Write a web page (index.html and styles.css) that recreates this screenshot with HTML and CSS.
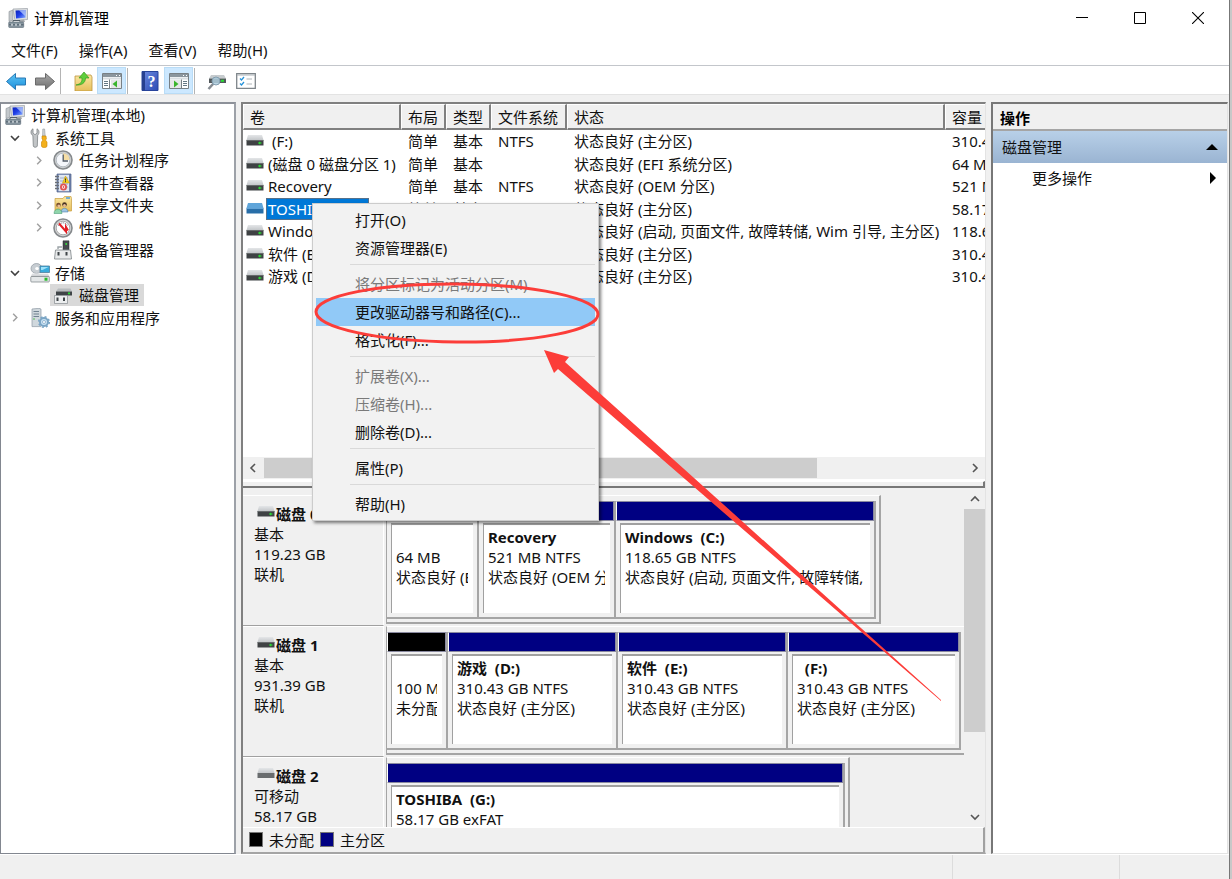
FILE: index.html
```html
<!DOCTYPE html>
<html lang="zh-CN">
<head>
<meta charset="utf-8">
<title>计算机管理</title>
<link rel="stylesheet" href="styles.css">
</head>
<body>
<svg class="defs" aria-hidden="true">
  <defs>
    <linearGradient id="gScreen" x1="0" y1="0" x2="1" y2="1"><stop offset="0" stop-color="#0a1fb8"/><stop offset=".5" stop-color="#2040e8"/><stop offset="1" stop-color="#8fb4ff"/></linearGradient>
    <linearGradient id="gBlue" x1="0" y1="0" x2="0" y2="1"><stop offset="0" stop-color="#5cc4f4"/><stop offset="1" stop-color="#1c8fdc"/></linearGradient>
    <linearGradient id="gGray" x1="0" y1="0" x2="0" y2="1"><stop offset="0" stop-color="#a8a8a8"/><stop offset="1" stop-color="#6f6f6f"/></linearGradient>
    <linearGradient id="gFolder" x1="0" y1="0" x2="0" y2="1"><stop offset="0" stop-color="#fbe7a2"/><stop offset="1" stop-color="#e6bf5c"/></linearGradient>
    <linearGradient id="gTop" x1="0" y1="0" x2="0" y2="1"><stop offset="0" stop-color="#e4e6e8"/><stop offset="1" stop-color="#c4c7ca"/></linearGradient>
    <linearGradient id="gHelp" x1="0" y1="0" x2="1" y2="1"><stop offset="0" stop-color="#6d8be0"/><stop offset="1" stop-color="#2c4bb4"/></linearGradient>
    <symbol id="computer" viewBox="0 0 20 20">
      <path d="M1 3.500l4-1.500v10l-4 1.500z" fill="#c3c8cc" stroke="#8b9196" stroke-width=".6"/>
      <path d="M5 1l14.500-.5v11L7 12.500z" fill="#dcdfe2" stroke="#989da3" stroke-width=".7"/>
      <path d="M7.500 2.400l10-.5v7.800l-9.500.9z" fill="url(#gScreen)"/>
      <path d="M11 2.200l6.500-.3v6.500z" fill="#b9cffb" opacity=".75"/>
      <path d="M12 12l4-.4 1 2.400h-4z" fill="#a5a9ad"/>
      <path d="M5 12.500h7v2H5z" fill="none" stroke="#55606a" stroke-width="1"/>
      <rect x=".7" y="14" width="15" height="5.500" rx=".8" fill="#84939d" stroke="#596873" stroke-width=".6"/>
      <path d="M1 16.800h14.500" stroke="#51606b"/><path d="M4 15.800v2M8 15.800v2M12 15.800v2" stroke="#dfe5e9" stroke-width="1.400"/>
    </symbol>
    <symbol id="tools" viewBox="0 0 20 20">
      <path d="M3 .8v4.400l2 1.500 2-1.500V.8c2.200 1 2.800 4.500.7 6.400L7.300 18c-.3 1.700-3.800 1.700-4 0L2.900 7.500C.2 6 .5 2 3 .8z" fill="#c2c5c7" stroke="#7f8487" stroke-width=".8"/>
      <path d="M12.800 1h1.800l.6 7h-2.600z" fill="#cfd3d5" stroke="#92979a" stroke-width=".6"/>
      <path d="M12 8h4l.4 3-1 1 1.600 2v4c0 2-5.500 2-5.500 0v-4l1.500-2-1-1z" fill="#f3b01c" stroke="#c98300" stroke-width=".6"/>
    </symbol>
    <symbol id="clock" viewBox="0 0 20 20">
      <circle cx="10" cy="10" r="9" fill="#d0d2d3" stroke="#85898c" stroke-width="1.600"/>
      <circle cx="10" cy="10" r="6.800" fill="#f4f6fa" stroke="#aab2ba" stroke-width=".8"/>
      <path d="M10 10V3.300a6.700 6.700 0 0 1 6.700 6.700z" fill="#f5dda4"/>
      <path d="M10.200 4.500V11H15" fill="none" stroke="#525b66" stroke-width="1.300"/>
    </symbol>
    <symbol id="eventlog" viewBox="0 0 20 20">
      <path d="M4 1h14v18H4z" fill="#7085b0" stroke="#51618a" stroke-width=".7"/><path d="M5.500 1.800H16v16.400H5.500z" fill="#dfe7f3"/>
      <path d="M7 5h8M7 8h8M7 11h8M7 14h8" stroke="#9fadc8"/>
      <path d="M2 3.500h4M2 6.500h4M2 9.500h4M2 12.500h4M2 15.500h4" stroke="#6a6f77" stroke-width="1.300"/>
      <path d="M12.500 3l4 7h-7z" fill="#f8cf1c" stroke="#bd970c" stroke-width=".5"/><path d="M12.500 5.500v2.200M12.500 8.200v1" stroke="#333"/>
      <circle cx="10.500" cy="14" r="2.600" fill="#fff" stroke="#e15353" stroke-width="1.800"/><circle cx="10.500" cy="14" r=".9" fill="#e15353"/>
    </symbol>
    <symbol id="shared" viewBox="0 0 20 20">
      <path d="M2 3.500h8l1.500-2h6.500l.5 2v12.500H2z" fill="url(#gFolder)" stroke="#c79c3c" stroke-width=".7"/><path d="M13 3h4" stroke="#4a9be0" stroke-width="1.500"/>
      <circle cx="5.500" cy="10" r="2.300" fill="#7a5130"/><circle cx="5.800" cy="11" r="1.500" fill="#e9bd93"/>
      <circle cx="11.500" cy="9.500" r="2.300" fill="#473224"/><circle cx="11.500" cy="10.500" r="1.500" fill="#e9bd93"/>
      <path d="M8 17c0-5 7-5 7 0z" fill="#9fc4e2" stroke="#38719f" stroke-width=".5"/><path d="M1 18.500c0-6 8-6 8 0z" fill="#8fd5ab" stroke="#3b906a" stroke-width=".5"/>
    </symbol>
    <symbol id="perf" viewBox="0 0 20 20">
      <circle cx="10" cy="10" r="9" fill="#d8d9da" stroke="#85898c" stroke-width="1.600"/><circle cx="10" cy="10" r="6.800" fill="#fff" stroke="#999" stroke-width=".8"/>
      <path d="M5.500 8A5 5 0 0 1 14.800 8" fill="none" stroke="#596168" stroke-dasharray="1 1"/>
      <path d="M6 5.500l7 8V9l2 3.500" fill="none" stroke="#e31f25" stroke-width="2"/>
    </symbol>
    <symbol id="device" viewBox="0 0 20 20">
      <path d="M10 .8h6v9h-6z" fill="#474b4e" stroke="#24292c" stroke-width=".5"/><circle cx="13.200" cy="4" r="1" fill="#38df3e"/>
      <path d="M5 9v-2h4" stroke="#9ba2a6" stroke-width="1.400" fill="none"/>
      <path d="M2.500 10h15l1 9h-17z" fill="#e8eaeb" stroke="#7c8386" stroke-width=".8"/><path d="M5.500 12v3.500M13.500 12v3.500" stroke="#3f4549" stroke-width="2"/>
    </symbol>
    <symbol id="storage" viewBox="0 0 20 20">
      <ellipse cx="6.500" cy="5.500" rx="5.500" ry="5" fill="#c7cdd2" stroke="#8e979f" stroke-width=".7"/><ellipse cx="7" cy="5.500" rx="1.800" ry="1.500" fill="#fff"/>
      <path d="M10 3h9.500v6.500H10z" fill="#38abdc" stroke="#4f7f9c" stroke-width=".8"/><path d="M11 4h7.500l-6 3H11z" fill="#9ce1fa"/>
      <path d="M2 10.500h16l1.500 3.500H.8z" fill="url(#gTop)"/><rect x=".8" y="13.500" width="18.500" height="5.500" rx=".8" fill="#e4e7e8" stroke="#777e83" stroke-width=".7"/><path d="M14.500 16.200h3" stroke="#27bc2c" stroke-width="3"/>
    </symbol>
    <symbol id="diskmgmt" viewBox="0 0 20 20">
      <path d="M5 3.500h12.500l1.500 3H3z" fill="#b8bcbe"/><path d="M3 6.500h16v4H3z" fill="#3f4447"/><circle cx="16" cy="8.400" r="1.100" fill="#29dc37"/>
      <path d="M1.500 10.500h13v8h-13z" fill="#eceeef" stroke="#858b8f" stroke-width=".7"/><path d="M4.500 12.500v3.500M11 12.500v3.500" stroke="#3f4549" stroke-width="2"/>
    </symbol>
    <symbol id="services" viewBox="0 0 20 20">
      <path d="M2 1l7-.7 2 .8v17.500H2z" fill="#d0d8dd" stroke="#8e9aa3" stroke-width=".7"/><path d="M3.500 3.500H9M3.500 6H9M3.500 8.500H9" stroke="#718291"/><circle cx="4" cy="11" r=".8" fill="#48bb47"/>
      <circle cx="14" cy="14" r="4" fill="#c9e2f4" stroke="#7aa5c5" stroke-width="2"/><circle cx="14" cy="14" r="5.300" fill="none" stroke="#7aa5c5" stroke-width="1.500" stroke-dasharray="2 2.160"/><circle cx="14" cy="14" r="1.500" fill="#fff" stroke="#6996b8" stroke-width=".6"/>
    </symbol>
    <symbol id="drive" viewBox="0 0 18 12">
      <path d="M2 0h14l1.500 5H.5z" fill="url(#gTop)"/><path d="M.5 5h17v5.500H.5z" fill="#3f4244"/><path d="M.5 5.500h17" stroke="#777b7d" stroke-width=".7"/><path d="M12 8h3.500M13.700 6.700v2.600" stroke="#2bdd33" stroke-width="1.200"/>
    </symbol>
    <symbol id="driveOff" viewBox="0 0 18 12"><path d="M2 0h14l1.500 5H.5z" fill="url(#gTop)"/><path d="M.5 5h17v5H.5z" fill="#696c6e"/></symbol>
    <symbol id="driveSel" viewBox="0 0 18 12"><path d="M2 0h14l1.500 5H.5z" fill="#5fa5da"/><path d="M.5 5h17v5.500H.5z" fill="#286ea8"/><path d="M.5 5.500h17" stroke="#7bb8e6" stroke-width=".7"/></symbol>
    <symbol id="left" viewBox="0 0 8 12"><path d="M6 2L2 6l4 4" fill="none" stroke="currentColor" stroke-width="1.600"/></symbol>
    <symbol id="right" viewBox="0 0 8 12"><path d="M2 2l4 4-4 4" fill="none" stroke="currentColor" stroke-width="1.600"/></symbol>
    <symbol id="down" viewBox="0 0 12 8"><path d="M2 2l4 4 4-4" fill="none" stroke="currentColor" stroke-width="1.600"/></symbol>
    <symbol id="up" viewBox="0 0 12 8"><path d="M2 6l4-4 4 4" fill="none" stroke="currentColor" stroke-width="1.600"/></symbol>
  </defs>
</svg>

<div class="window">
  <header class="titlebar">
    <svg class="icon"><use href="#computer"/></svg>
    <h1 class="title">计算机管理</h1>
    <div class="caption-buttons">
      <button class="caption" aria-label="最小化"><svg viewBox="0 0 12 12"><path d="M0 5.500h12" stroke="#000"/></svg></button>
      <button class="caption" aria-label="最大化"><svg viewBox="0 0 12 12"><path d="M.5.5h11v11H.5z" fill="none" stroke="#000"/></svg></button>
      <button class="caption" aria-label="关闭"><svg viewBox="0 0 12 12"><path d="M0 0l12 12M12 0L0 12" stroke="#000" stroke-width="1.100"/></svg></button>
    </div>
  </header>

  <nav class="menubar">
    <button>文件(F)</button><button>操作(A)</button><button>查看(V)</button><button>帮助(H)</button>
  </nav>

  <div class="toolbar">
    <button class="tool" aria-label="后退"><svg class="icon" viewBox="0 0 20 20"><path d="M.5 10.500l9-8v4.500h10v7h-10v4.500z" fill="url(#gBlue)" stroke="#2878b4"/></svg></button>
    <button class="tool" aria-label="前进"><svg class="icon" viewBox="0 0 20 20"><path d="M19.500 10.500l-9-8v4.500H.5v7h10v4.500z" fill="url(#gGray)" stroke="#6a6a6a"/></svg></button>
    <span class="tool-sep"></span>
    <button class="tool" aria-label="上一级"><svg class="icon" viewBox="0 0 20 20"><path d="M2 5h8l1-1h7l1 2v14H2z" fill="url(#gFolder)" stroke="#bd9440" stroke-width=".8"/><path d="M3 14c5-1 6-3 6-7H6l5-6 5 6h-3.500c0 5-4 7.500-9.500 7z" fill="#5fce3c" stroke="#389b22" stroke-width=".7"/></svg></button>
    <button class="tool on" aria-label="显示/隐藏控制台树"><svg class="icon" viewBox="0 0 20 20"><path d="M.5 2.500h19v15H.5z" fill="#fff" stroke="#788085"/><path d="M1 3h18v3H1z" fill="#8b969e"/><path d="M14 4.500h1M17 4.500h1" stroke="#fff"/><path d="M1 6.500h18v2H1z" fill="#d9dee2"/><path d="M2 10.500h4M2 12.500h4M2 14.500h4" stroke="#657985"/><path d="M7.500 8.500v9" stroke="#788085"/><path d="M9 9h10v8H9z" fill="#e5e7e8"/><path d="M15 9.500v7L10.500 13z" fill="#3ab52c"/></svg></button>
    <span class="tool-sep"></span>
    <button class="tool" aria-label="帮助"><svg class="icon" viewBox="0 0 20 20"><path d="M2 .5h16v19H2z" fill="url(#gHelp)" stroke="#27449c"/><path d="M2 .5h3v19H2z" fill="#27408f"/><text class="help-mark" x="11.500" y="16" text-anchor="middle">?</text></svg></button>
    <button class="tool on" aria-label="显示/隐藏操作窗格"><svg class="icon" viewBox="0 0 20 20"><path d="M.5 2.500h19v15H.5z" fill="#fff" stroke="#788085"/><path d="M1 3h18v3H1z" fill="#8b969e"/><path d="M14 4.500h1M17 4.500h1" stroke="#fff"/><path d="M1 6.500h18v2H1z" fill="#d9dee2"/><path d="M14 10.500h4M14 12.500h4M14 14.500h4" stroke="#657985"/><path d="M12.500 8.500v9" stroke="#788085"/><path d="M1 9h11v8H1z" fill="#e5e7e8"/><path d="M5 9.500v7L9.500 13z" fill="#3ab52c"/></svg></button>
    <span class="tool-sep"></span>
    <button class="tool" aria-label="重新扫描磁盘"><svg class="icon" viewBox="0 0 20 20"><path d="M4 4h13l2 3.500H2z" fill="#c6cbce"/><path d="M2 7.500h17V12H2z" fill="#52585b"/><path d="M14 9.800h3" stroke="#28dd32" stroke-width="2"/><path d="M6.500 12.500L1.500 18" stroke="#858b91" stroke-width="2.500"/><circle cx="9" cy="10" r="4" fill="#b0cfdf" fill-opacity=".85" stroke="#829daf"/></svg></button>
    <button class="tool" aria-label="属性"><svg class="icon" viewBox="0 0 20 20"><path d="M.7 2.700h18.600v14.600H.7z" fill="#fff" stroke="#7e858a" stroke-width="1.300"/><path d="M1 4h18" stroke="#a9b0b5"/><path d="M4 7.500l1.500 1.500L8 6M4 12.500L5.500 14 8 11" fill="none" stroke="#2793da" stroke-width="1.300"/><path d="M10.500 8H16M10.500 13H16" stroke="#aeb4b8"/></svg></button>
  </div>

  <main class="workspace">
    <aside class="tree-pane">
      <ul class="tree">
        <li class="root"><svg class="icon"><use href="#computer"/></svg><span>计算机管理(本地)</span></li>
        <li class="branch"><svg class="chev"><use href="#down"/></svg><svg class="icon"><use href="#tools"/></svg><span>系统工具</span></li>
        <li class="leaf"><svg class="chev closed"><use href="#right"/></svg><svg class="icon"><use href="#clock"/></svg><span>任务计划程序</span></li>
        <li class="leaf"><svg class="chev closed"><use href="#right"/></svg><svg class="icon"><use href="#eventlog"/></svg><span>事件查看器</span></li>
        <li class="leaf"><svg class="chev closed"><use href="#right"/></svg><svg class="icon"><use href="#shared"/></svg><span>共享文件夹</span></li>
        <li class="leaf"><svg class="chev closed"><use href="#right"/></svg><svg class="icon"><use href="#perf"/></svg><span>性能</span></li>
        <li class="leaf"><i class="chev"></i><svg class="icon"><use href="#device"/></svg><span>设备管理器</span></li>
        <li class="branch"><svg class="chev"><use href="#down"/></svg><svg class="icon"><use href="#storage"/></svg><span>存储</span></li>
        <li class="leaf"><i class="chev"></i><div class="selected"><svg class="icon"><use href="#diskmgmt"/></svg><span>磁盘管理</span></div></li>
        <li class="branch"><svg class="chev closed"><use href="#right"/></svg><svg class="icon"><use href="#services"/></svg><span>服务和应用程序</span></li>
      </ul>
    </aside>

    <section class="center-pane">
      <div class="volumes">
        <div class="volume-list">
          <table>
            <colgroup><col class="c-vol"><col class="c-short"><col class="c-short"><col class="c-fs"><col class="c-state"><col class="c-size"></colgroup>
            <thead><tr><th>卷</th><th>布局</th><th>类型</th><th>文件系统</th><th>状态</th><th>容量</th></tr></thead>
            <tbody>
              <tr><td><div class="cell"><svg class="drive"><use href="#drive"/></svg><span class="vol">&nbsp;(F:)</span></div></td><td>简单</td><td>基本</td><td>NTFS</td><td>状态良好 (主分区)</td><td>310.43 GB</td></tr>
              <tr><td><div class="cell"><svg class="drive"><use href="#drive"/></svg><span class="vol">(磁盘 0 磁盘分区 1)</span></div></td><td>简单</td><td>基本</td><td></td><td>状态良好 (EFI 系统分区)</td><td>64 MB</td></tr>
              <tr><td><div class="cell"><svg class="drive"><use href="#drive"/></svg><span class="vol">Recovery</span></div></td><td>简单</td><td>基本</td><td>NTFS</td><td>状态良好 (OEM 分区)</td><td>521 MB</td></tr>
              <tr><td><div class="cell"><svg class="drive"><use href="#driveSel"/></svg><span class="vol picked">TOSHIBA&nbsp; (G:)</span></div></td><td>简单</td><td>基本</td><td>exFAT</td><td>状态良好 (主分区)</td><td>58.17 GB</td></tr>
              <tr><td><div class="cell"><svg class="drive"><use href="#drive"/></svg><span class="vol">Windows (C:)</span></div></td><td>简单</td><td>基本</td><td>NTFS</td><td>状态良好 (启动, 页面文件, 故障转储, Wim 引导, 主分区)</td><td>118.65 GB</td></tr>
              <tr><td><div class="cell"><svg class="drive"><use href="#drive"/></svg><span class="vol">软件 (E:)</span></div></td><td>简单</td><td>基本</td><td>NTFS</td><td>状态良好 (主分区)</td><td>310.43 GB</td></tr>
              <tr><td><div class="cell"><svg class="drive"><use href="#drive"/></svg><span class="vol">游戏 (D:)</span></div></td><td>简单</td><td>基本</td><td>NTFS</td><td>状态良好 (主分区)</td><td>310.43 GB</td></tr>
            </tbody>
          </table>
        </div>
        <div class="hscroll">
          <button aria-label="向左滚动"><svg class="arrow-h"><use href="#left"/></svg></button>
          <div class="htrack"><div class="hthumb"></div></div>
          <button aria-label="向右滚动"><svg class="arrow-h"><use href="#right"/></svg></button>
        </div>
      </div>
      <div class="splitter"></div>
      <div class="disks">
        <div class="disk-list">
          <article class="disk">
            <div class="disk-label"><h2><svg class="drive"><use href="#drive"/></svg>磁盘 0</h2><p>基本</p><p>119.23 GB</p><p>联机</p></div>
            <div class="map">
              <div class="part w92"><div class="bar"></div><div class="info"><b>&nbsp;</b><span>64 MB</span><span>状态良好 (EFI 系统分区)</span></div></div>
              <div class="part w137"><div class="bar"></div><div class="info"><b>Recovery</b><span>521 MB NTFS</span><span>状态良好 (OEM 分区)</span></div></div>
              <div class="part w260"><div class="bar"></div><div class="info"><b>Windows&nbsp; (C:)</b><span>118.65 GB NTFS</span><span>状态良好 (启动, 页面文件, 故障转储,</span></div></div>
            </div>
          </article>
          <article class="disk">
            <div class="disk-label"><h2><svg class="drive"><use href="#drive"/></svg>磁盘 1</h2><p>基本</p><p>931.39 GB</p><p>联机</p></div>
            <div class="map">
              <div class="part w62"><div class="bar free"></div><div class="info"><b>&nbsp;</b><span>100 MB</span><span>未分配</span></div></div>
              <div class="part w170"><div class="bar"></div><div class="info"><b>游戏&nbsp; (D:)</b><span>310.43 GB NTFS</span><span>状态良好 (主分区)</span></div></div>
              <div class="part w170"><div class="bar"></div><div class="info"><b>软件&nbsp; (E:)</b><span>310.43 GB NTFS</span><span>状态良好 (主分区)</span></div></div>
              <div class="part w173"><div class="bar"></div><div class="info"><b>&nbsp; (F:)</b><span>310.43 GB NTFS</span><span>状态良好 (主分区)</span></div></div>
            </div>
          </article>
          <article class="disk">
            <div class="disk-label"><h2><svg class="drive"><use href="#driveOff"/></svg>磁盘 2</h2><p>可移动</p><p>58.17 GB</p><p>联机</p></div>
            <div class="map">
              <div class="part w459"><div class="bar"></div><div class="info"><b>TOSHIBA&nbsp; (G:)</b><span>58.17 GB exFAT</span><span>状态良好 (主分区)</span></div></div>
            </div>
          </article>
        </div>
        <div class="vscroll">
          <button aria-label="向上滚动"><svg class="arrow-v"><use href="#up"/></svg></button>
          <div class="vtrack"><div class="vthumb"></div></div>
          <button aria-label="向下滚动"><svg class="arrow-v"><use href="#down"/></svg></button>
        </div>
      </div>
      <div class="legend"><i class="swatch free"></i><span>未分配</span><i class="swatch"></i><span>主分区</span></div>
    </section>

    <aside class="actions">
      <h2 class="actions-title">操作</h2>
      <button class="actions-group"><span>磁盘管理</span><svg class="tri" viewBox="0 0 12 12"><path d="M0 9l6-6 6 6z"/></svg></button>
      <button class="actions-more"><span>更多操作</span><svg class="tri" viewBox="0 0 12 12"><path d="M4 0l6 6-6 6z"/></svg></button>
    </aside>
  </main>

  <footer class="statusbar"><span></span><span></span><span></span></footer>
</div>

<div class="context-menu" role="menu">
  <button role="menuitem">打开(O)</button>
  <button role="menuitem">资源管理器(E)</button>
  <hr>
  <button role="menuitem" disabled>将分区标记为活动分区(M)</button>
  <button role="menuitem" class="hot">更改驱动器号和路径(C)...</button>
  <button role="menuitem">格式化(F)...</button>
  <hr>
  <button role="menuitem" disabled>扩展卷(X)...</button>
  <button role="menuitem" disabled>压缩卷(H)...</button>
  <button role="menuitem">删除卷(D)...</button>
  <hr>
  <button role="menuitem">属性(P)</button>
  <hr>
  <button role="menuitem">帮助(H)</button>
</div>

<svg class="annotation" viewBox="0 0 640 440" aria-hidden="true">
  <ellipse cx="147" cy="43" rx="141" ry="29" fill="none" stroke="#fc3d39" stroke-width="3" transform="rotate(.5 147 43)"/>
  <path d="M234 80l25 7-4 5 376 338v1L248 99l-4 4z" fill="#fc3d39"/>
</svg>
</body>
</html>
```
FILE: styles.css
```css
* { box-sizing: border-box; }

body {
  margin: 0;
  background: #c8c8c8;
  color: #111;
  font: 15px/20px "Noto Sans", "Noto Sans CJK SC", sans-serif;
  overflow: hidden;
}

h1, h2, p, ul { margin: 0; padding: 0; font-size: 15px; }
h1 { font-weight: 400; }
ul { list-style: none; }
button { margin: 0; padding: 0; border: 0; background: none; color: inherit; font: inherit; }

.defs { position: absolute; width: 0; height: 0; }
.icon { width: 20px; height: 20px; flex: none; display: block; }
.drive { width: 18px; height: 12px; flex: none; }

.window {
  display: flex;
  flex-direction: column;
  height: 100vh;
  margin-right: 2px;
  border-right: 1px solid #777;
  background: #f0f0f0;
}

/* Title, menu and tool bars */
.titlebar { display: flex; align-items: center; gap: 6px; height: 35px; padding: 0 2px 0 8px; background: #fff; }
.title { flex: 1; color: #000; }
.caption-buttons { display: flex; }
.caption { width: 58px; height: 35px; display: grid; place-items: center; }
.caption svg { width: 12px; height: 12px; }

.menubar { display: flex; gap: 21px; height: 31px; padding-left: 11px; background: #fff; border-bottom: 1px solid #c3c6cb; }

.toolbar { display: flex; align-items: flex-end; height: 29px; padding-left: 1px; background: #fff; border-bottom: 1px solid #e3e3e3; }
.tool { width: 29px; height: 27px; display: grid; place-items: center; }
.tool.on { background: #cce8ff; border: 1px solid #b9dcf6; }
.tool-sep { width: 1px; height: 26px; margin: 0 1px; background: #b4b4b4; }
.tool-sep + .tool { margin-left: 6px; }
.help-mark { font: bold 16px "Liberation Serif", serif; fill: #fff; }

/* Three-pane workspace */
.workspace { flex: 1; min-height: 0; display: grid; grid-template-columns: 236px 1fr 237px; gap: 5px; padding: 7px 1px 0 0; }

.tree-pane { background: #fff; border: 1px solid #828790; border-width: 2px 2px 1px 1px; border-color: #8d9199 #9da1a8 #828790 #828790; }
.tree { display: grid; grid-template-rows: repeat(10, 1fr); height: 225px; }
.tree li { display: flex; align-items: center; }
.tree span { margin-left: 6px; white-space: nowrap; }
.root { padding-left: 4px; }
.branch { padding-left: 8px; }
.leaf { padding-left: 32px; }
.branch .icon { margin-left: 9px; }
.branch span { margin-left: 5px; }
.leaf > .icon { margin-left: 8px; }
.leaf .selected { margin-left: 5px; }
.chev { width: 12px; height: 8px; flex: none; color: #404040; }
.chev.closed { width: 12px; height: 11px; color: #a0a0a0; }
.selected { display: flex; align-items: center; height: 22px; padding: 0 5px 0 3px; background: #d9d9d9; }

.center-pane { display: flex; flex-direction: column; min-width: 0; border: 2px solid #808080; border-right: 1px solid #e3e3e3; border-bottom: 2px solid #a5a5a5; }

.volumes { flex: 377 1 0; min-height: 0; display: flex; flex-direction: column; background: #fff; }
.volume-list { flex: 1; min-height: 0; overflow: hidden; }
table { table-layout: fixed; border-collapse: separate; border-spacing: 0; width: 804px; }
.c-vol { width: 158px; }
.c-short { width: 45px; }
.c-fs { width: 76px; }
.c-state { width: 378px; }
th { height: 26px; padding: 0 0 0 6px; text-align: left; font-weight: 400; background: #f0f0f0; border: 1px solid #fff; border-right: 2px solid #808080; border-bottom: 2px solid #808080; white-space: nowrap; }
td { height: 22px; padding: 0 0 0 7px; white-space: nowrap; overflow: hidden; }
tr:nth-child(even) td { height: 23px; }
td:first-child { padding-left: 3px; }
.cell { display: flex; align-items: center; height: 22px; }
.vol { height: 22px; line-height: 22px; padding: 0 2px; margin-left: 2px; }
.vol.picked { padding-right: 6px; background: #0078d7; color: #fff; outline: 1px solid #55718c; outline-offset: -1px; }

.hscroll { display: flex; height: 22px; margin-bottom: 2px; background: #f0f0f0; }
.hscroll button { width: 20px; display: grid; place-items: center; }
.arrow-h { width: 8px; height: 12px; color: #555; }
.arrow-v { width: 12px; height: 8px; color: #555; }
.htrack { flex: 1; padding: 1px; }
.hthumb { width: 79%; height: 20px; background: #cdcdcd; }

.splitter { height: 7px; border-top: 1px solid #fff; border-bottom: 2px solid #777; border-right: 2px solid #777; background: #f0f0f0; }

/* Graphical disk view */
.disks { flex: 339 1 0; min-height: 0; display: flex; }
.disk-list { flex: 1; min-width: 0; overflow: hidden; padding-top: 7px; }
.disk { display: flex; height: 131px; }
.disk-label { flex: none; width: 141px; padding: 8px 0 0 11px; border-top: 1px solid #fff; border-bottom: 1px solid #a0a0a0; border-right: 1px solid #fff; }
.disk-label h2 { padding-left: 3px; white-space: nowrap; }
.disk-label h2 .drive { margin-right: 1px; vertical-align: 2px; }
.map { display: flex; flex: none; height: 129px; margin-left: 2px; padding: 5px 3px 3px 0; border: 2px solid #a5a5a5; border-top: 1px solid #fff; border-left-width: 1px; }
.part { display: flex; flex-direction: column; border-right: 2px solid #a5a5a5; border-bottom: 2px solid #a5a5a5; }
.bar { height: 20px; flex: none; background: #000082; border: 1px solid #8a8aa0; border-left: 1px solid #fff; }
.bar.free { background: #000; }
.info { flex: 1; min-height: 0; display: flex; flex-direction: column; margin: 2px 4px 4px 4px; padding: 2px 5px 0 4px; background: #fff; border-top: 2px solid #a0a0a0; border-left: 1px solid #a0a0a0; }
.info b, .info span { white-space: nowrap; overflow: hidden; }
.w62 { width: 61px; }
.w92 { width: 92px; }
.w137 { width: 137px; }
.w170 { width: 170px; }
.w173 { width: 173px; }
.w260 { width: 260px; }
.w459 { width: 458px; }

.vscroll { width: 21px; display: flex; flex-direction: column; }
.vscroll button { height: 21px; display: grid; place-items: center; }
.vtrack { flex: 1; }
.vthumb { height: 75%; background: #cdcdcd; }

.legend { display: flex; align-items: center; height: 25px; padding: 0 0 1px 6px; border-top: 1px solid #fff; border-right: 2px solid #a0a0a0; }
.swatch { width: 14px; height: 15px; background: #000082; border: 1px solid #777; }
.swatch.free { background: #000; }
.legend span { margin: 0 6px; }

/* Actions pane */
.actions { display: flex; flex-direction: column; background: #fff; border: 2px solid #777; border-right: 1px solid #e3e3e3; border-bottom: 1px solid #e3e3e3; }
.actions-title { height: 27px; padding: 4px 0 0 7px; background: #f0f0f0; border-bottom: 2px solid #a5a5a5; color: #000; }
.actions-group, .actions-more { display: flex; align-items: center; justify-content: space-between; height: 32px; padding: 0 9px; }
.actions-group { background: linear-gradient(#b8d0e8, #9ab4d2); }
.actions-more { height: 30px; padding-left: 39px; }
.tri { width: 12px; height: 12px; }

.statusbar { display: grid; grid-template-columns: 1fr 167px 110px; height: 25px; border-top: 1px solid #fff; }
.statusbar span { border-left: 1px solid #dcdcdc; }
.statusbar span:first-child { border-left: 0; }

/* Context menu floating over the volume list */
.context-menu {
  position: absolute;
  left: 312px;
  top: 203px;
  width: 287px;
  padding: 2px 3px;
  background: #f2f2f2;
  border: 1px solid #ccc;
  box-shadow: 2px 2px 3px rgba(0, 0, 0, .5);
}
.context-menu button { display: block; width: 100%; height: 28px; padding-left: 39px; text-align: left; }
.context-menu button:disabled { color: #7a7a7a; }
.context-menu .hot { background: #91c9f7; }
.context-menu hr { height: 8px; margin: 0 0 0 34px; border: 0; background: linear-gradient(#d9d9d9, #d9d9d9) 0 2px / 100% 1px no-repeat; }

.annotation { position: absolute; left: 310px; top: 270px; width: 640px; height: 440px; pointer-events: none; }
```
